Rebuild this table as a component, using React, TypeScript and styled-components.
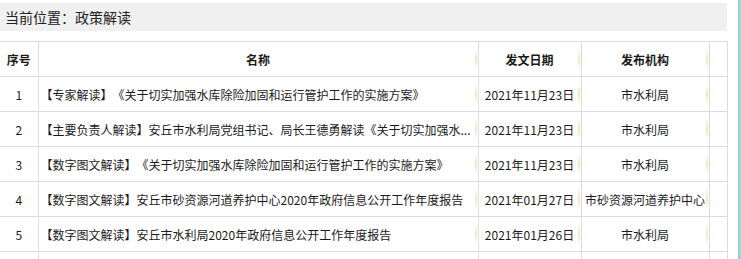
import React from "react";
import styled, { createGlobalStyle } from "styled-components";

const GlobalStyle = createGlobalStyle`
  html, body {
    margin: 0;
    padding: 0;
    overflow: hidden;
    background: #fff;
  }
  body {
    font-family: "Noto Sans CJK SC", "Noto Sans", sans-serif;
    color: #222;
    text-spacing-trim: space-all;
  }
`;

const Layout = styled.div`
  display: flex;
  height: 100vh;
`;

const Main = styled.div`
  width: 727px;
  padding-top: 3px;
  display: flex;
  flex-direction: column;
  gap: 10px;
`;

const SideEdge = styled.div`
  width: 3px;
  margin-left: auto;
  background: linear-gradient(to right, #8fc7d9, #a9d6e6);
`;

const Breadcrumb = styled.div`
  height: 28px;
  line-height: 28px;
  padding-left: 5px;
  background: #f0f0f0;
  font-size: 14px;
  color: #222;
`;

const Table = styled.table`
  width: 727px;
  border-collapse: collapse;
  table-layout: fixed;
  font-size: 12px;
  border-top: 1px solid #ddd;
`;

const Row = styled.tr`
  height: 35px;
`;

const Cell = styled.td<{ $align?: "left" | "center"; $glow?: boolean; $head?: boolean }>`
  position: relative;
  border: 1px solid #dcdcdc;
  text-align: ${({ $align }) => $align ?? "center"};
  font-weight: ${({ $head }) => ($head ? 700 : 400)};
  padding: ${({ $align }) => ($align === "left" ? "0 4px 0 2px" : "0 2px")};
  white-space: nowrap;
  overflow: hidden;
  text-overflow: ellipsis;
  color: #1a1a1a;

  &:first-child {
    border-left: none;
  }

  ${({ $glow }) =>
    $glow &&
    `
    &::after {
      content: "";
      position: absolute;
      right: 1px;
      top: 6px;
      bottom: 6px;
      width: 2px;
      background: linear-gradient(to bottom, rgba(253, 230, 190, 0), #fce3bb 50%, rgba(253, 230, 190, 0));
    }
  `}
`;

const columns = [
  { title: "序号", width: 38, glow: false },
  { title: "名称", width: 440, glow: true },
  { title: "发文日期", width: 103, glow: true },
  { title: "发布机构", width: 128, glow: true },
  { title: "", width: 18, glow: false },
];

const rows = [
  {
    no: "1",
    name: "【专家解读】《关于切实加强水库除险加固和运行管护工作的实施方案》",
    date: "2021年11月23日",
    org: "市水利局",
  },
  {
    no: "2",
    name: "【主要负责人解读】安丘市水利局党组书记、局长王德勇解读《关于切实加强水...",
    date: "2021年11月23日",
    org: "市水利局",
  },
  {
    no: "3",
    name: "【数字图文解读】《关于切实加强水库除险加固和运行管护工作的实施方案》",
    date: "2021年11月23日",
    org: "市水利局",
  },
  {
    no: "4",
    name: "【数字图文解读】安丘市砂资源河道养护中心2020年政府信息公开工作年度报告",
    date: "2021年01月27日",
    org: "市砂资源河道养护中心",
  },
  {
    no: "5",
    name: "【数字图文解读】安丘市水利局2020年政府信息公开工作年度报告",
    date: "2021年01月26日",
    org: "市水利局",
  },
  // next row only peeks in at the bottom edge
  { no: "", name: "", date: "", org: "" },
];

const App: React.FC = () => {
  return (
    <>
      <GlobalStyle />
      <Layout>
        <Main>
          <Breadcrumb>当前位置：政策解读</Breadcrumb>
          <Table>
            <colgroup>
              {columns.map((col, i) => (
                <col key={i} style={{ width: col.width }} />
              ))}
            </colgroup>
            <thead>
              <Row>
                {columns.map((col, i) => (
                  <Cell as="th" key={i} $head $glow={col.glow}>
                    {col.title}
                  </Cell>
                ))}
              </Row>
            </thead>
            <tbody>
              {rows.map((row, i) => (
                <Row key={i}>
                  <Cell>{row.no}</Cell>
                  <Cell $align="left" $glow>
                    {row.name}
                  </Cell>
                  <Cell $glow>{row.date}</Cell>
                  <Cell $glow>{row.org}</Cell>
                  <Cell />
                </Row>
              ))}
            </tbody>
          </Table>
        </Main>
        <SideEdge />
      </Layout>
    </>
  );
};

export default App;
